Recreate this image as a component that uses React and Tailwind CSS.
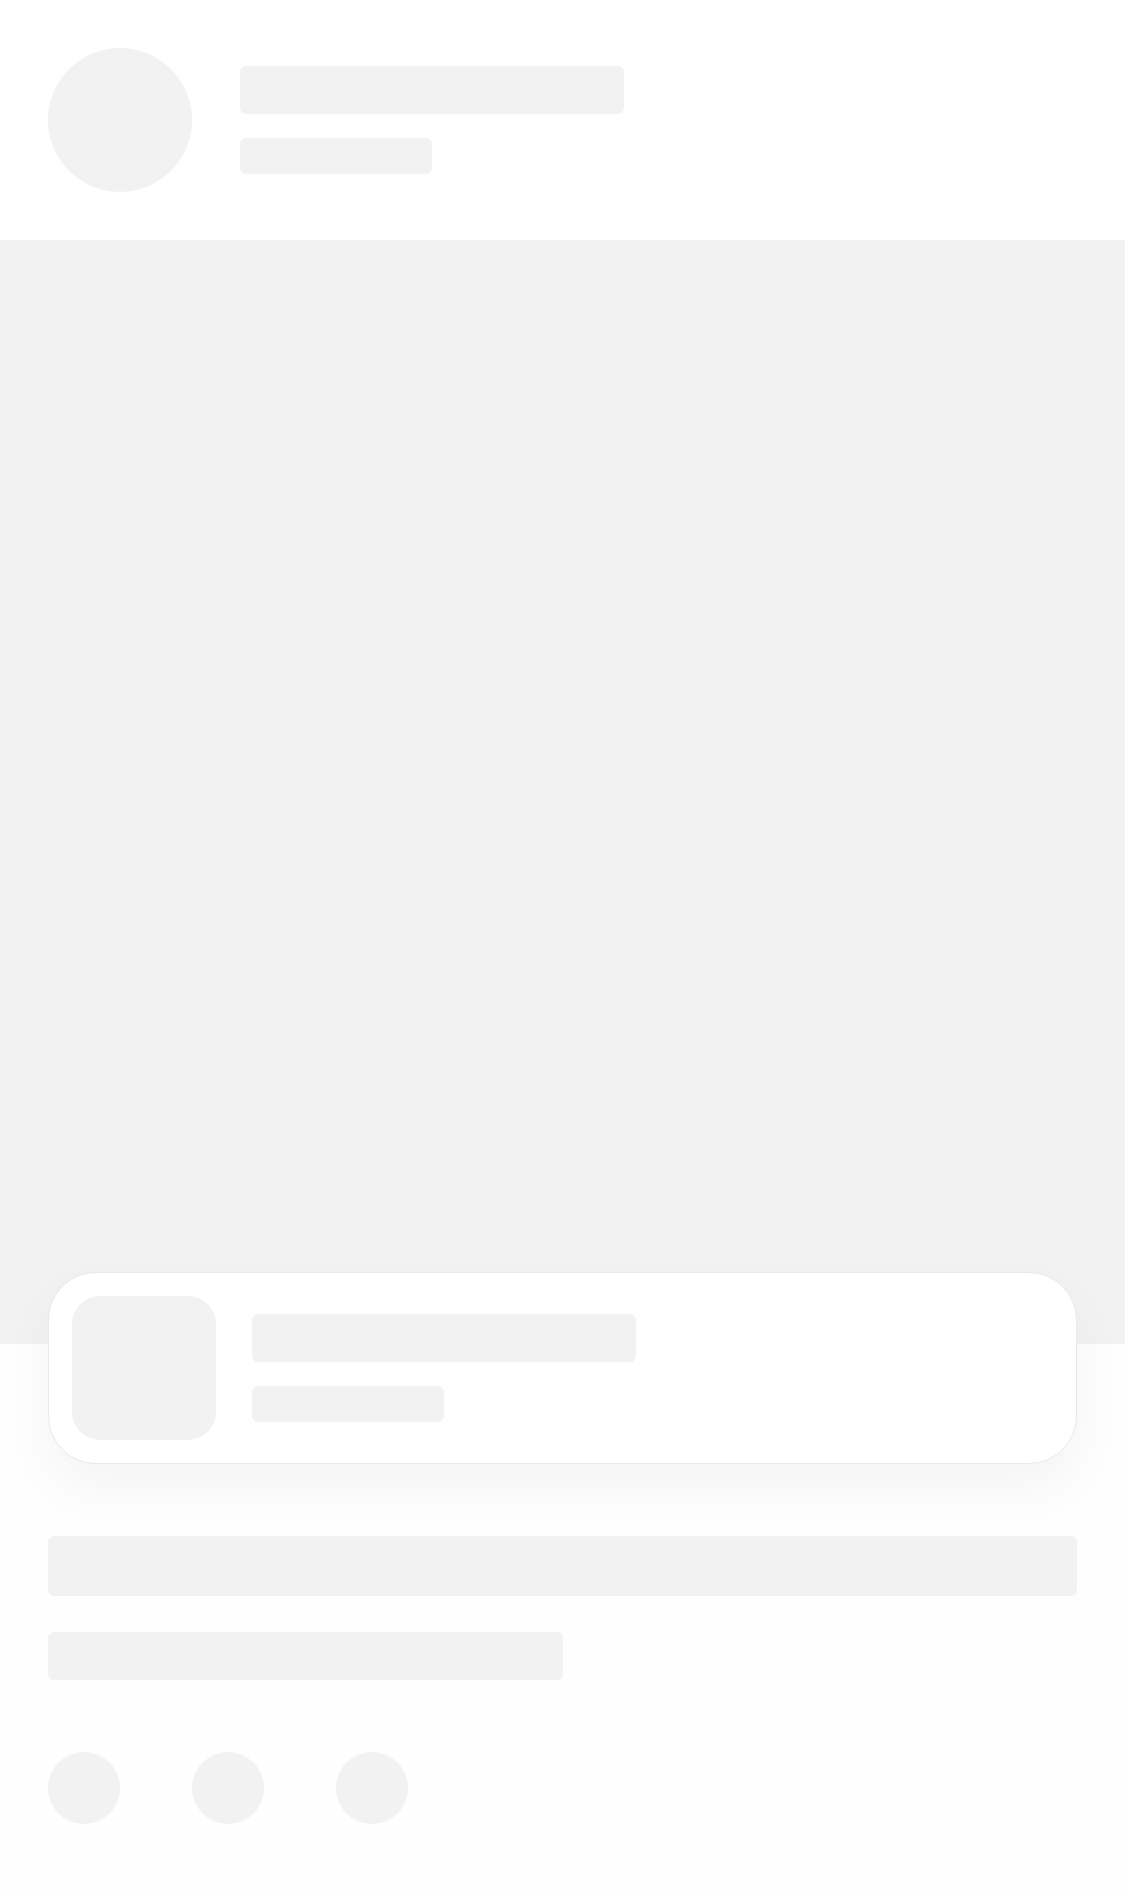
export default function App() {
  return (
    <div className="min-h-[1896px] w-[1125px] bg-[#fefefe]">
      {/* header */}
      <div className="flex items-center gap-12 bg-white p-12">
        <div className="h-36 w-36 shrink-0 rounded-full bg-[#f2f2f2]"></div>
        <div className="flex flex-col gap-6">
          <div className="h-12 w-[384px] rounded-md bg-[#f2f2f2]"></div>
          <div className="h-9 w-48 rounded-md bg-[#f2f2f2]"></div>
        </div>
      </div>

      {/* media */}
      <div className="h-[1104px] w-full bg-[#f2f2f2]"></div>

      {/* floating card */}
      <div className="relative z-10 mx-12 -mt-[72px] flex items-center gap-9 rounded-[48px] border border-[#e9e9e9] bg-white p-[23px] shadow-[0_24px_56px_rgba(0,0,0,0.045)]">
        <div className="h-36 w-36 shrink-0 rounded-[28px] bg-[#f2f2f2]"></div>
        <div className="flex flex-col gap-6">
          <div className="h-12 w-[384px] rounded-md bg-[#f2f2f2]"></div>
          <div className="h-9 w-48 rounded-md bg-[#f2f2f2]"></div>
        </div>
      </div>

      {/* body */}
      <div className="flex flex-col px-12 pt-[72px] pb-[72px]">
        <div className="h-[60px] w-full rounded-md bg-[#f2f2f2]"></div>
        <div className="mt-9 h-12 w-1/2 rounded-md bg-[#f2f2f2]"></div>
        <div className="mt-[72px] flex gap-[72px]">
          <div className="h-[72px] w-[72px] rounded-full bg-[#f2f2f2]"></div>
          <div className="h-[72px] w-[72px] rounded-full bg-[#f2f2f2]"></div>
          <div className="h-[72px] w-[72px] rounded-full bg-[#f2f2f2]"></div>
        </div>
      </div>
    </div>
  );
}
